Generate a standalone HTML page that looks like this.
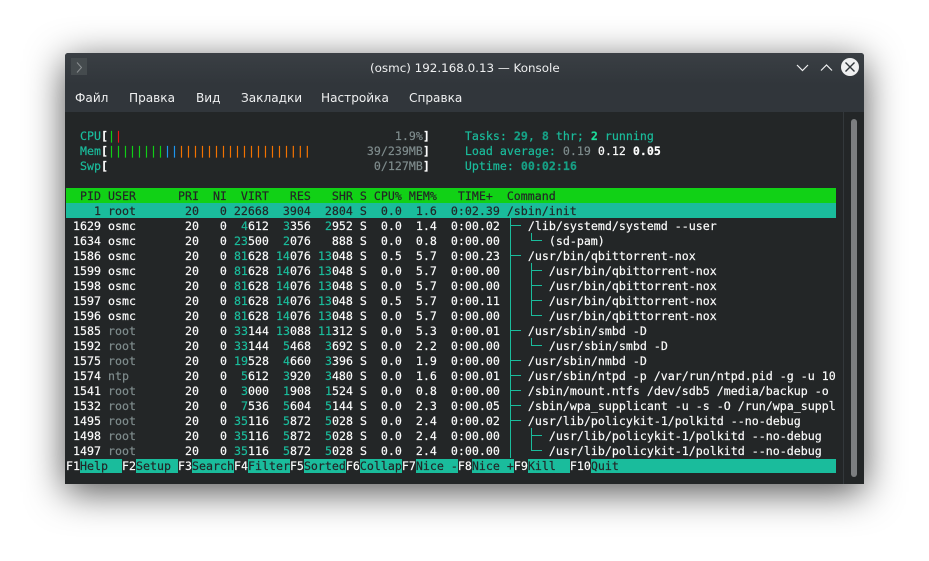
<!DOCTYPE html>
<html><head><meta charset="utf-8"><style>
html,body{margin:0;padding:0;width:929px;height:561px;overflow:hidden;background:#fff}
#w{position:absolute;left:65px;top:53px;width:799px;height:431px;border-radius:3px 3px 0 0;background:#31363b;box-shadow:0 8px 38px rgba(0,0,0,.68)}
#tb{position:absolute;left:0;top:0;width:799px;height:31px;border-radius:3px 3px 0 0;background:linear-gradient(#3a3f44,#31363b)}
.ui{position:absolute;font-family:"DejaVu Sans","Liberation Sans",sans-serif;font-size:12.1px;color:#eff0f1;white-space:pre;line-height:16px}
#term{position:absolute;left:65px;top:112px;width:799px;height:372px;background:#232627}
#sep{position:absolute;left:843px;top:112px;width:1px;height:372px;background:#33383b}
#thumb{position:absolute;left:851px;top:119px;width:6px;height:358px;border-radius:3px;background:#7c7e80}
.r{position:absolute;left:66px;width:770px;height:15px;line-height:17px;font-family:"DejaVu Sans Mono","Liberation Mono",monospace;font-size:11.6px;letter-spacing:.017px;white-space:pre;color:#fcfcfc;overflow:hidden;-webkit-text-stroke:.18px}
.c{color:#1abc9c}.g{color:#7f8c8d}.b{font-weight:bold}.t{color:#16a085}.n{color:#1cdc9a;font-weight:bold}
.hd{background:#11d116;color:#232627}.sel{background:#1abc9c;color:#232627}
.gr{color:#11d116}.bl{color:#1d99f3}.or{color:#f67400}.rd{color:#ed1515}
.f{background:#1abc9c;color:#232627}
</style></head><body>
<div id="w"><div id="tb"></div></div>
<div id="term"></div><div id="sep"></div><div id="thumb"></div>
<svg style="position:absolute;left:0;top:0" width="929" height="561">
<rect x="71" y="58" width="16" height="17" fill="#454b4e"/>
<path d="M77 62.5L81.5 67.5L77 72.5" fill="none" stroke="#8a8e90" stroke-width="1"/>
<path d="M797 65L802.5 70.5L808 65M821 70.5L826.5 65L832 70.5" fill="none" stroke="#eff0f1" stroke-width="1.2"/>
<circle cx="850" cy="67" r="9" fill="#eff0f1"/>
<path d="M845.5 62.5L854.5 71.5M854.5 62.5L845.5 71.5" fill="none" stroke="#31363b" stroke-width="1.4"/>
</svg>
<div class="ui" style="left:370px;top:60px;font-size:11.9px">(osmc) 192.168.0.13 — Konsole</div>
<div class="ui" style="left:75px;top:90px">Файл</div>
<div class="ui" style="left:129px;top:90px">Правка</div>
<div class="ui" style="left:196px;top:90px">Вид</div>
<div class="ui" style="left:241px;top:90px">Закладки</div>
<div class="ui" style="left:321px;top:90px">Настройка</div>
<div class="ui" style="left:409px;top:90px">Справка</div>

<div class="r" style="top:128px">  <span class="c">CPU</span><span class="b">[</span><span class="gr">|</span><span class="rd">|</span>                                       <span class="g">1.9%</span><span class="b">]</span>     <span class="c">Tasks: </span><span class="t b">29</span><span class="c">, </span><span class="t b">8</span><span class="c"> thr; </span><span class="n">2</span><span class="c"> running</span></div>
<div class="r" style="top:143px">  <span class="c">Mem</span><span class="b">[</span><span class="gr">||||||||</span><span class="bl">||</span><span class="or">|||||||||||||||||||</span>        <span class="g">39/239MB</span><span class="b">]</span>     <span class="c">Load average: </span><span class="g">0.19 </span>0.12 <span class="b">0.05</span></div>
<div class="r" style="top:158px">  <span class="c">Swp</span><span class="b">[</span>                                      <span class="g">0/127MB</span><span class="b">]</span>     <span class="c">Uptime: </span><span class="t b">00:02:16</span></div>

<div class="r hd" style="top:188px">  PID USER      PRI  NI  VIRT   RES   SHR S CPU% MEM%   TIME+  Command</div>
<div class="r sel" style="top:203px">    1 root       20   0 22668  3904  2804 S  0.0  1.6  0:02.39 /sbin/init</div>
<div class="r" style="top:218px"> 1629 osmc       20   0  <span class="c">4</span>612  <span class="c">3</span>356  <span class="c">2</span>952 S  0.0  1.4  0:00.02    /lib/systemd/systemd --user</div>
<div class="r" style="top:233px"> 1634 osmc       20   0 <span class="c">23</span>500  <span class="c">2</span>076   888 S  0.0  0.8  0:00.00       (sd-pam)</div>
<div class="r" style="top:248px"> 1586 osmc       20   0 <span class="c">81</span>628 <span class="c">14</span>076 <span class="c">13</span>048 S  0.5  5.7  0:00.23    /usr/bin/qbittorrent-nox</div>
<div class="r" style="top:263px"> 1599 osmc       20   0 <span class="c">81</span>628 <span class="c">14</span>076 <span class="c">13</span>048 S  0.0  5.7  0:00.00       /usr/bin/qbittorrent-nox</div>
<div class="r" style="top:278px"> 1598 osmc       20   0 <span class="c">81</span>628 <span class="c">14</span>076 <span class="c">13</span>048 S  0.0  5.7  0:00.00       /usr/bin/qbittorrent-nox</div>
<div class="r" style="top:293px"> 1597 osmc       20   0 <span class="c">81</span>628 <span class="c">14</span>076 <span class="c">13</span>048 S  0.5  5.7  0:00.11       /usr/bin/qbittorrent-nox</div>
<div class="r" style="top:308px"> 1596 osmc       20   0 <span class="c">81</span>628 <span class="c">14</span>076 <span class="c">13</span>048 S  0.0  5.7  0:00.00       /usr/bin/qbittorrent-nox</div>
<div class="r" style="top:323px"> 1585 <span class="g">root</span>       20   0 <span class="c">33</span>144 <span class="c">13</span>088 <span class="c">11</span>312 S  0.0  5.3  0:00.01    /usr/sbin/smbd -D</div>
<div class="r" style="top:338px"> 1592 <span class="g">root</span>       20   0 <span class="c">33</span>144  <span class="c">5</span>468  <span class="c">3</span>692 S  0.0  2.2  0:00.00       /usr/sbin/smbd -D</div>
<div class="r" style="top:353px"> 1575 <span class="g">root</span>       20   0 <span class="c">19</span>528  <span class="c">4</span>660  <span class="c">3</span>396 S  0.0  1.9  0:00.00    /usr/sbin/nmbd -D</div>
<div class="r" style="top:368px"> 1574 <span class="g">ntp</span>        20   0  <span class="c">5</span>612  <span class="c">3</span>920  <span class="c">3</span>480 S  0.0  1.6  0:00.01    /usr/sbin/ntpd -p /var/run/ntpd.pid -g -u 10</div>
<div class="r" style="top:383px"> 1541 <span class="g">root</span>       20   0  <span class="c">3</span>000  <span class="c">1</span>908  <span class="c">1</span>524 S  0.0  0.8  0:00.00    /sbin/mount.ntfs /dev/sdb5 /media/backup -o</div>
<div class="r" style="top:398px"> 1532 <span class="g">root</span>       20   0  <span class="c">7</span>536  <span class="c">5</span>604  <span class="c">5</span>144 S  0.0  2.3  0:00.05    /sbin/wpa_supplicant -u -s -O /run/wpa_suppl</div>
<div class="r" style="top:413px"> 1495 <span class="g">root</span>       20   0 <span class="c">35</span>116  <span class="c">5</span>872  <span class="c">5</span>028 S  0.0  2.4  0:00.02    /usr/lib/policykit-1/polkitd --no-debug</div>
<div class="r" style="top:428px"> 1498 <span class="g">root</span>       20   0 <span class="c">35</span>116  <span class="c">5</span>872  <span class="c">5</span>028 S  0.0  2.4  0:00.00       /usr/lib/policykit-1/polkitd --no-debug</div>
<div class="r" style="top:443px"> 1497 <span class="g">root</span>       20   0 <span class="c">35</span>116  <span class="c">5</span>872  <span class="c">5</span>028 S  0.0  2.4  0:00.00       /usr/lib/policykit-1/polkitd --no-debug</div>
<div class="r" style="top:458px">F1<span class="f">Help  </span>F2<span class="f">Setup </span>F3<span class="f">Search</span>F4<span class="f">Filter</span>F5<span class="f">Sorted</span>F6<span class="f">Collap</span>F7<span class="f">Nice -</span>F8<span class="f">Nice +</span>F9<span class="f">Kill  </span>F10<span class="f">Quit                                   </span></div>

<svg style="position:absolute;left:0;top:0" width="929" height="561">
<path d="M510.5 218V458M510 225.5H521M510 255.5H521M510 330.5H521M510 360.5H521M510 375.5H521M510 390.5H521M510 405.5H521M510 420.5H521M531.5 233V240.5H542M531.5 263V315.5H542M531 270.5H542M531 285.5H542M531 300.5H542M531.5 338V345.5H542M531.5 428V450.5H542M531 435.5H542" fill="none" stroke="#1abc9c" stroke-width="1" shape-rendering="crispEdges"/>
</svg>
</body></html>
